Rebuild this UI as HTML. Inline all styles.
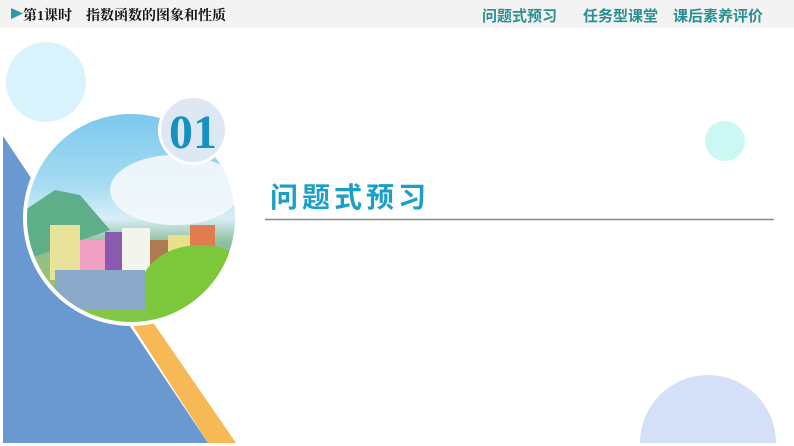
<!DOCTYPE html>
<html><head><meta charset="utf-8"><style>
*{margin:0;padding:0;box-sizing:border-box}
html,body{width:794px;height:446px;overflow:hidden}
body{background:#fff;position:relative;font-family:"Liberation Serif","Noto Serif CJK SC",serif}
.hdr{position:absolute;left:0;top:0;width:794px;height:28px;background:#f3f3f3}
.hdr .l{position:absolute;left:23px;top:5px;font-size:14px;color:#111;font-weight:bold}
.hdr .r{position:absolute;top:5px;font-size:15px;color:#2a8f90;font-weight:bold;font-family:"Liberation Sans","Noto Sans CJK SC",sans-serif}
</style></head><body>
<svg style="position:absolute;left:0;top:0" width="794" height="446">
<circle cx="46" cy="82" r="40" fill="#d8f3fb"/>
<circle cx="725" cy="141" r="20" fill="#ccf8f4"/>
<circle cx="708" cy="443" r="68" fill="#d3e0f8"/>
<rect x="0" y="443" width="794" height="3" fill="#fff"/>
<polygon points="128,318 150,318 236,443 208,443" fill="#f7b955"/>
<polygon points="3,136 3,443 208,443" fill="#6a98d0"/>
<defs><linearGradient id="g" x1="0" y1="0" x2="0" y2="1">
<stop offset="0" stop-color="#7cc8ee"/><stop offset="0.35" stop-color="#a8dcf2"/><stop offset="0.5" stop-color="#d8eef8"/><stop offset="0.62" stop-color="#8cc09a"/><stop offset="0.8" stop-color="#9fbf6a"/><stop offset="1" stop-color="#7ec840"/></linearGradient>
<clipPath id="cp"><circle cx="131" cy="218" r="104"/></clipPath></defs>
<circle cx="131" cy="218" r="108" fill="#fff"/>
<circle cx="131" cy="218" r="104" fill="url(#g)"/>
<g clip-path="url(#cp)">
<polygon points="25,210 55,190 80,195 110,230 25,260" fill="#5fae8a"/>
<ellipse cx="175" cy="190" rx="65" ry="35" fill="#f4f8fc" opacity="0.9"/>
<rect x="50" y="225" width="30" height="55" fill="#e9e29a"/>
<rect x="80" y="240" width="25" height="40" fill="#f0a0c0"/>
<rect x="105" y="232" width="20" height="40" fill="#8a5ab0"/>
<rect x="122" y="228" width="28" height="45" fill="#f4f4ee"/>
<rect x="150" y="240" width="20" height="40" fill="#b07a50"/>
<rect x="168" y="235" width="24" height="40" fill="#e8e08a"/>
<rect x="190" y="225" width="25" height="40" fill="#e07c50"/>
<ellipse cx="200" cy="290" rx="60" ry="45" fill="#7cc83a"/>
<rect x="55" y="270" width="90" height="40" fill="#8aa8c8"/>
</g>
<circle cx="193" cy="130" r="35" fill="#fff"/>
<circle cx="193" cy="130" r="32" fill="#dde8f2"/>
<text x="193" y="148" text-anchor="middle" font-family="Liberation Serif" font-weight="bold" font-size="48" fill="#1590c0">01</text>
<line x1="265" y1="219.5" x2="774" y2="219.5" stroke="#888" stroke-width="1.5"/>
</svg>
<div class="hdr">
<svg style="position:absolute;left:11px;top:8px" width="12" height="11"><polygon points="0,0 12,5.5 0,11" fill="#2a9aa8"/></svg>
<div class="l">第1课时　指数函数的图象和性质</div>
<div class="r" style="left:482px">问题式预习</div>
<div class="r" style="left:583px">任务型课堂</div>
<div class="r" style="left:673px">课后素养评价</div>
</div>
<div style="position:absolute;left:270px;top:176px;font-size:28px;color:#1a9fc8;font-weight:bold;letter-spacing:4px;font-family:'Liberation Sans','Noto Sans CJK SC',sans-serif">问题式预习</div>
</body></html>
